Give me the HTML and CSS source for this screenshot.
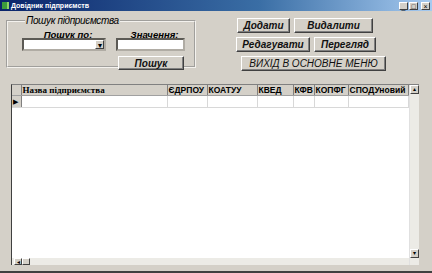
FILE: index.html
```html
<!DOCTYPE html>
<html>
<head>
<meta charset="utf-8">
<title>Довідник підприємств</title>
<link rel="stylesheet" href="styles.css">
</head>
<body>
<div class="window">
  <div class="titlebar">
    <span class="appicon"></span>
    <span class="title">Довідник підприємств</span>
    <div class="controls">
      <span class="ctl">_</span><span class="ctl">□</span><span class="ctl close">×</span>
    </div>
  </div>

  <div class="top">
    <fieldset class="search">
      <legend>Пошук підприємства</legend>
      <div class="fields">
        <div class="field">
          <label>Пошук по:</label>
          <div class="combo"><span class="drop">▾</span></div>
        </div>
        <div class="field">
          <label>Значення:</label>
          <div class="edit"></div>
        </div>
      </div>
      <div class="searchrow"><span class="btn b-search">Пошук</span></div>
    </fieldset>

    <div class="actions">
      <div class="row">
        <span class="btn b-add">Додати</span>
        <span class="btn b-del">Видалити</span>
      </div>
      <div class="row">
        <span class="btn b-edit">Редагувати</span>
        <span class="btn b-view">Перегляд</span>
      </div>
      <div class="row">
        <span class="btn b-exit">ВИХІД В ОСНОВНЕ МЕНЮ</span>
      </div>
    </div>
  </div>

  <div class="gridwrap">
    <div class="grid">
      <div class="gridbody">
        <table class="cols">
          <colgroup>
            <col class="w-ind"><col class="w-name"><col class="w1"><col class="w2">
            <col class="w3"><col class="w4"><col class="w5"><col class="w6">
          </colgroup>
          <tr class="head">
            <th class="ind"></th>
            <th class="serif">Назва підприємства</th>
            <th>ЄДРПОУ</th>
            <th>КОАТУУ</th>
            <th>КВЕД</th>
            <th>КФВ</th>
            <th>КОПФГ</th>
            <th>СПОДУновий</th>
          </tr>
          <tr class="datarow">
            <td class="ind">▶</td>
            <td></td><td></td><td></td><td></td><td></td><td></td><td></td>
          </tr>
        </table>
        <div class="empty"></div>
        <div class="hscroll">
          <span class="sbtn">◂</span><span class="sbtn"></span>
        </div>
      </div>
      <div class="vscroll">
        <span class="sbtn up">▴</span>
        <span class="vtrack"></span>
        <span class="sbtn dn">▾</span>
        <span class="sbtn rt">▸</span>
      </div>
    </div>
  </div>
</div>
</body>
</html>
```

FILE: styles.css
```css
body{
	margin: 0;
	padding: 0;
	font-family: "Liberation Sans", Arial, sans-serif;
	background: #d4d0c8;
}
.window{
	width: 432px;
	height: 273px;
	background: #d4d0c8;
	box-sizing: border-box;
	border-bottom: 2px solid #404040;
	display: flex;
	flex-direction: column;
}
.titlebar{
	height: 11px;
	background: linear-gradient(to right, #0a246a, #3a6ea5 60%, #a6caf0);
	display: flex;
	align-items: center;
	color: #fff;
	padding-left: 2px;
}
.appicon{
	width: 5px;
	height: 7px;
	background: #3c9a3c;
	border-right: 2px solid #8fd16a;
	margin-right: 2px;
}
.title{
	font-size: 7px;
	font-weight: bold;
}
.controls{
	margin-left: auto;
	display: flex;
	gap: 1px;
	padding-right: 2px;
}
.ctl{
	width: 9px;
	height: 8px;
	background: #d4d0c8;
	color: #000;
	font-size: 7px;
	line-height: 8px;
	text-align: center;
	box-sizing: border-box;
	border: 1px solid;
	border-color: #fff #404040 #404040 #fff;
}
.close{
	margin-left: 2px;
}

.top{
	display: flex;
	height: 73px;
}
.search{
	margin: 4px 0 0 6px;
	padding: 0 6px 0 14px;
	width: 166px;
	height: 49px;
	border: 2px groove #f4f2ee;
}
.search legend{
	font-size: 10px;
	font-style: italic;
	letter-spacing: -0.35px;
	padding: 0 1px;
	margin-left: 3px;
	line-height: 11px;
}
.fields{
	display: flex;
	gap: 10px;
	margin-top: 4px;
}
.field{
	display: flex;
	flex-direction: column;
	align-items: center;
}
.field label{
	font-size: 9.5px;
	font-style: italic;
	font-weight: bold;
	text-decoration: underline;
	line-height: 9px;
	margin-left: 8px;
	margin-bottom: -1px;
}
.combo, .edit{
	height: 13px;
	background: #fff;
	box-sizing: border-box;
	border: 2px inset #b0aca4;
	position: relative;
}
.combo{
	width: 84px;
}
.edit{
	width: 69px;
}
.drop{
	position: absolute;
	right: 0;
	top: 0;
	width: 9px;
	height: 9px;
	background: #d4d0c8;
	font-size: 8px;
	line-height: 9px;
	text-align: center;
	box-sizing: border-box;
	border: 1px solid;
	border-color: #fff #404040 #404040 #fff;
}
.searchrow{
	display: flex;
	justify-content: flex-end;
	margin-top: 5px;
	padding-right: 4px;
}

.btn{
	display: inline-flex;
	align-items: center;
	justify-content: center;
	height: 15px;
	background: #d4d0c8;
	font-size: 10px;
	font-style: italic;
	font-weight: bold;
	color: #111;
	box-sizing: border-box;
	border: 1px solid;
	border-color: #fff #404040 #404040 #fff;
	box-shadow: inset -1px -1px #808080;
}
.b-search{ width: 66px; height: 14px; }
.actions{
	margin: 7px 0 0 41px;
	display: flex;
	flex-direction: column;
	gap: 4px;
}
.row{
	display: flex;
	gap: 4px;
}
.b-add{ width: 53px; }
.b-del{ width: 79px; }
.b-edit{ width: 74px; margin-left: -1px; }
.b-view{ width: 62px; }
.b-exit{ width: 145px; margin-left: 4px; font-weight: normal; }

.gridwrap{
	flex: 1;
	padding: 0 15px 6px 11px;
	display: flex;
}
.grid{
	flex: 1;
	display: flex;
	border-left: 1px solid #404040;
	border-top: 1px solid #808080;
	background: #fff;
}
.gridbody{
	flex: 1;
	display: flex;
	flex-direction: column;
	min-width: 0;
}
.cols{
	border-collapse: collapse;
	table-layout: fixed;
	width: 396px;
}
.w-ind{ width: 9px; }
.w-name{ width: 146px; }
.w1{ width: 40px; }
.w2{ width: 50px; }
.w3{ width: 36px; }
.w4{ width: 21px; }
.w5{ width: 34px; }
.w6{ width: 60px; }
.cols th, .cols td{
	padding: 0 0 0 1px;
	border-right: 1px solid #a0a0a0;
	border-bottom: 1px solid #a0a0a0;
	white-space: nowrap;
	overflow: hidden;
	text-align: left;
}
.head th{
	height: 10px;
	background: #d4d0c8;
	font-size: 8.5px;
	font-weight: bold;
	line-height: 10px;
	border-right-color: #808080;
}
.head .serif{
	font-family: "Liberation Serif", "Times New Roman", serif;
	font-size: 9px;
}
.datarow td{
	height: 11px;
	border-color: #d8d8d8;
}
.datarow .ind{
	background: #d4d0c8;
	font-size: 7px;
	line-height: 11px;
	border-right-color: #808080;
}
.empty{
	flex: 1;
	background: #fff;
}
.hscroll{
	height: 7px;
	background: #ecebe6;
	display: flex;
	padding-left: 2px;
}
.sbtn{
	width: 8px;
	height: 7px;
	background: #d4d0c8;
	font-size: 6px;
	line-height: 6px;
	text-align: center;
	box-sizing: border-box;
	border: 1px solid;
	border-color: #fff #404040 #404040 #fff;
}
.vscroll{
	width: 9px;
	display: flex;
	flex-direction: column;
	background: #ecebe6;
	border-left: 1px solid #e0e0e0;
}
.vscroll .sbtn{
	width: 9px;
	height: 9px;
}
.vtrack{
	flex: 1;
}
.vscroll .rt{
	height: 7px;
	visibility: hidden;
}
```
